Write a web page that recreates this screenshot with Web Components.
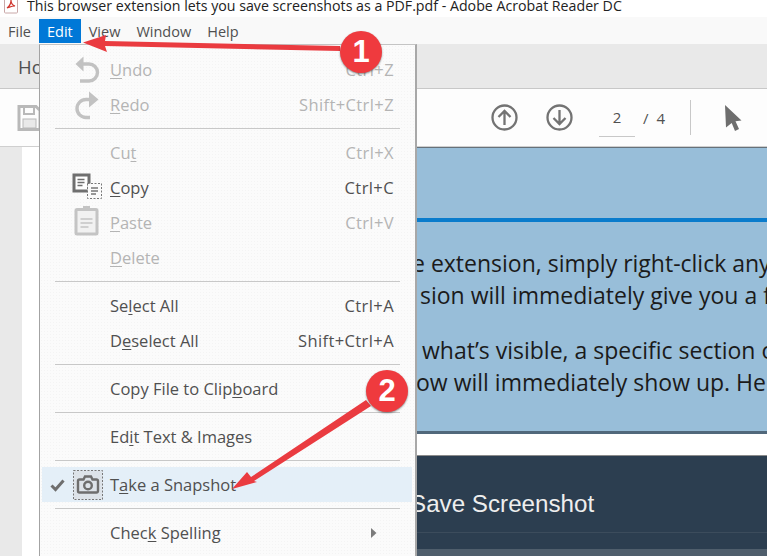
<!DOCTYPE html>
<html lang="en">
<head>
<meta charset="utf-8">
<title>Adobe Acrobat Reader DC</title>
<style>
  html, body { margin: 0; height: 100%; overflow: hidden; background: #fff; }
  body { font-family: "Open Sans", "Liberation Sans", sans-serif; display: flex; flex-direction: column; position: relative; }
  u { text-underline-offset: 2px; text-decoration-thickness: 1px; }
  [slot="keys"] { letter-spacing: .4px; }
</style>
</head>
<body>
<title-bar>This browser extension lets you save screenshots as a PDF.pdf - Adobe Acrobat Reader DC</title-bar>
<menu-bar></menu-bar>
<tab-bar>Home</tab-bar>
<tool-bar></tool-bar>
<doc-view></doc-view>

<edit-menu>
  <menu-row disabled>
    <svg slot="icon" width="30" height="30" viewBox="0 0 30 30"><path d="M9 9h7a8.500 8.500 0 0 1 0 17H7" fill="none" stroke="#c2c2c2" stroke-width="3.400"/><path d="M10.500 1.500v15L2.500 9z" fill="#c2c2c2"/></svg>
    <u>U</u>ndo<span slot="keys">Ctrl+Z</span>
  </menu-row>
  <menu-row disabled>
    <svg slot="icon" width="30" height="30" viewBox="0 0 30 30"><path d="M17 9.500h-4a9 9 0 0 0 0 18h4" fill="none" stroke="#c2c2c2" stroke-width="3.400"/><path d="M16 1.500v16l9.500-8z" fill="#c2c2c2"/></svg>
    <u>R</u>edo<span slot="keys">Shift+Ctrl+Z</span>
  </menu-row>
  <menu-sep></menu-sep>
  <menu-row disabled>Cu<u>t</u><span slot="keys">Ctrl+X</span></menu-row>
  <menu-row>
    <svg slot="icon" width="32" height="30" viewBox="0 0 32 30"><rect x="2" y="2" width="15" height="16" fill="#fff" stroke="#6f6f6f" stroke-width="3"/><path d="M5.500 6.500h7M5.500 9.500h7M5.500 12.500h5" stroke="#6f6f6f" stroke-width="1.300"/><rect x="15.500" y="10.500" width="14" height="15" fill="#fbfbfb" stroke="#777" stroke-dasharray="2 1.500"/><path d="M19 15h7M19 18h7M19 21h5" stroke="#777" stroke-width="1.300"/></svg>
    <u>C</u>opy<span slot="keys">Ctrl+C</span>
  </menu-row>
  <menu-row disabled>
    <svg slot="icon" width="32" height="34" viewBox="0 0 32 34"><rect x="4" y="3.500" width="21" height="24.500" rx="1" fill="#f1f1f1" stroke="#c4c4c4" stroke-width="3"/><rect x="11" y="0" width="7" height="5" fill="#c4c4c4"/><path d="M8.500 13h12M8.500 17h12M8.500 21h8" stroke="#c4c4c4" stroke-width="1.500"/></svg>
    <u>P</u>aste<span slot="keys">Ctrl+V</span>
  </menu-row>
  <menu-row disabled><u>D</u>elete</menu-row>
  <menu-sep></menu-sep>
  <menu-row>Se<u>l</u>ect All<span slot="keys">Ctrl+A</span></menu-row>
  <menu-row>D<u>e</u>select All<span slot="keys">Shift+Ctrl+A</span></menu-row>
  <menu-sep></menu-sep>
  <menu-row>Copy File to Clip<u>b</u>oard</menu-row>
  <menu-sep></menu-sep>
  <menu-row>Ed<u>i</u>t Text &amp; Images</menu-row>
  <menu-sep></menu-sep>
  <menu-row active checked>
    <svg slot="icon" width="30" height="30" viewBox="0 0 30 30"><rect x=".5" y=".5" width="29" height="29" fill="#dde3e9" stroke="#777" stroke-dasharray="2 1.500"/><path d="M6.500 9.500h4l1.500-3h6l1.500 3h4a1.500 1.500 0 0 1 1.500 1.500v10a1.500 1.500 0 0 1-1.500 1.500h-17A1.500 1.500 0 0 1 5 21V11a1.500 1.500 0 0 1 1.500-1.500z" fill="none" stroke="#6e6e6e" stroke-width="2.400"/><circle cx="15" cy="15.500" r="3.800" fill="none" stroke="#6e6e6e" stroke-width="2.400"/></svg>
    T<u>a</u>ke a Snapshot
  </menu-row>
  <menu-sep></menu-sep>
  <menu-row submenu>Chec<u>k</u> Spelling</menu-row>
</edit-menu>

<step-arrow style="left:0;top:0" points="83,42.500 106,35 105,41 340,46 340,51 105,46 107,52"></step-arrow>
<step-arrow style="left:0;top:0" points="232,489 247,472 251,477 366,400 371,406 254,481 257,482"></step-arrow>
<step-badge style="left:340px;top:31px">1</step-badge>
<step-badge style="left:366px;top:370px">2</step-badge>

<script>
'use strict';

// small helper so every element below is just a tag name and a template string
function define(name, html, setup) {
  customElements.define(name, class extends HTMLElement {
    constructor() {
      super();
      const shadow = this.attachShadow({ mode: 'open' });
      shadow.innerHTML = typeof html === 'function' ? html(this) : html;
      if (setup) setup(this, shadow);
    }
  });
}

define('title-bar', `
  <style>
    :host { display: flex; align-items: center; height: 17px; padding-left: 4px; gap: 9px; overflow: hidden;
      background: #fff; color: #222; font: 14.200px/17px "Open Sans", sans-serif; white-space: nowrap; flex: none; }
    svg { flex: none; margin-top: -7px; }
    span { margin-top: -7px; }
  </style>
  <svg width="14" height="17" viewBox="0 0 14 17"><path d="M.5 0v15a1 1 0 0 0 1 1h11a1 1 0 0 0 1-1V0" fill="#fff" stroke="#c9a8a8"/><path d="M3 11c3-2 4-5 4-8 0 3 1 5 4 6-3 0-5 1-8 2z" fill="none" stroke="#d0342c" stroke-width="1.200"/></svg>
  <span><slot></slot></span>
`);

define('menu-bar', `
  <style>
    :host { display: flex; height: 27px; padding: 2px 0 0 0; box-sizing: border-box; background: #f9f9f9; flex: none;
      font: 14.500px/25px "Open Sans", sans-serif; color: #505050; }
    span { padding: 0 8px; height: 24px; }
    .on { background: #0078d7; color: #fff; }
  </style>
  <span>File</span><span class="on">Edit</span><span>View</span><span>Window</span><span>Help</span>
`);

define('tab-bar', `
  <style>
    :host { display: flex; align-items: center; height: 45px; padding-left: 18px; box-sizing: border-box; flex: none;
      background: #e9e9e9; border-bottom: 1px solid #c8c8c8; color: #505050; font: 18.500px "Open Sans", sans-serif; }
  </style>
  <slot></slot>
`);

define('tool-bar', `
  <style>
    :host { display: flex; align-items: center; height: 58px; box-sizing: border-box; padding: 0 0 0 17px; flex: none;
      background: #fdfdfd; border-bottom: 1px solid #cfcfcf; color: #505050; font: 15px "Open Sans", sans-serif; }
    .save { margin-right: 450px; }
    .nav { margin-right: 28px; display: block; }
    .page { width: 36px; height: 36px; line-height: 32px; margin: 2px 0 0 26px; text-align: center; border-bottom: 1px solid #c8c8c8; box-sizing: border-box; }
    .of { margin-left: 8px; word-spacing: 4px; }
    .rule { width: 1px; height: 35px; background: #c8c8c8; margin-left: 25px; }
    .arrow { margin-left: 34px; }
  </style>
  <svg class="save" width="24" height="28" viewBox="0 0 24 28"><path d="M2 2.500h17l4 4V25.500H2z" fill="#fdfdfd" stroke="#b9b9b9" stroke-width="3"/><rect x="7" y="3" width="10" height="7" fill="#fdfdfd" stroke="#b9b9b9" stroke-width="2"/><rect x="6" y="15" width="13" height="9" fill="#e9e9e9" stroke="#b9b9b9" stroke-width="1"/></svg>
  <svg class="nav" width="27" height="27" viewBox="0 0 27 27"><circle cx="13.500" cy="13.500" r="12" fill="none" stroke="#737373" stroke-width="2.300"/><path d="M13.500 21V7M7.500 13l6-6 6 6" fill="none" stroke="#737373" stroke-width="2.300"/></svg>
  <svg class="nav" width="27" height="27" viewBox="0 0 27 27" style="margin-right:0"><circle cx="13.500" cy="13.500" r="12" fill="none" stroke="#737373" stroke-width="2.300"/><path d="M13.500 6v14M7.500 14l6 6 6-6" fill="none" stroke="#737373" stroke-width="2.300"/></svg>
  <span class="page">2</span>
  <span class="of">/ 4</span>
  <span class="rule"></span>
  <svg class="arrow" width="17" height="26" viewBox="0 0 17 26"><path d="M0 0l16.500 15.500-6 .8 3.500 7.700-4 2-3.300-8L1 22.500z" fill="#6e6e6e"/></svg>
`);

define('doc-view', `
  <style>
    :host { display: flex; flex: 1; min-height: 0; background: #fff; overflow: hidden; }
    .rail { width: 22px; background: #e9e9e9; flex: none; }
    .page { flex: 1; min-width: 0; margin-left: 18px; display: flex; flex-direction: column; overflow: hidden; }
    .blue { height: 287px; flex: none; box-sizing: border-box; background: #98bed9; border-top: 1px solid #66717a; border-bottom: 3px solid #51687b; color: #1b1b1b;
      font: 23px/32px "Open Sans", sans-serif; white-space: nowrap; padding-top: 70px; display: flex; flex-direction: column; }
    .band { height: 4px; background: #0a7ccc; flex: none; margin-bottom: 25px; }
    .line { margin-left: var(--x); height: 32px; flex: none; }
    .gap { height: 21px; flex: none; }
    .gap-p { height: 23px; flex: none; }
    .dark { flex: 1; background: #2c3e50; border-top: 1px solid #8b8b8b; display: flex; flex-direction: column; color: #eee; }
    .head { font: 24.200px "Liberation Sans", sans-serif; height: 77px; box-sizing: border-box; padding: 34px 0 0 370px; white-space: nowrap; border-bottom: 1px solid #3c4c5c; flex: none; }
    .foot { margin-top: 16px; flex: 1; background: #4f5e6c; }
  </style>
  <div class="rail"></div>
  <div class="page">
    <div class="blue">
      <div class="band"></div>
      <div class="line" style="--x:372px">e extension, simply right-click any</div>
      <div class="line" style="--x:380px">sion will immediately give you a f</div>
      <div class="gap-p"></div>
      <div class="line" style="--x:382px">what’s visible, a specific section o</div>
      <div class="line" style="--x:376px">ow will immediately show up. He</div>
    </div>
    <div class="gap"></div>
    <div class="dark">
      <div class="head">Save Screenshot</div>
      <div class="foot"></div>
    </div>
  </div>
`);

define('edit-menu', `
  <style>
    :host { display: block; position: absolute; left: 39px; top: 44px; width: 378px; height: 512px; box-sizing: border-box; overflow: hidden;
      padding: 7px 3px 0 2px; border-left: 1.500px solid #a3a3a3; border-top: 1px solid #c4c4c4; border-right: 2px solid #a8a8a8;
      background-color: #fbfbfb; background-image: radial-gradient(#f4f4f4 .6px, transparent .7px); background-size: 3px 3px;
      font: 16.500px "Open Sans", sans-serif; color: #505050; }
  </style>
  <slot></slot>
`);

define('menu-row', `
  <style>
    :host { display: flex; align-items: center; height: 35px; position: relative; padding: 0 18px 0 68px; white-space: nowrap; }
    :host([disabled]) { color: #b4b4b4; }
    :host([active]) { background: #e4eff8; }
    .icon { position: absolute; left: 30px; top: 0; bottom: 0; width: 32px; display: flex; align-items: center; justify-content: center; }
    .check { display: none; position: absolute; left: 8px; top: 11px; }
    :host([checked]) .check { display: block; }
    .text { flex: 1; }
    .more { display: none; position: absolute; right: 35px; top: 13px; }
    :host([submenu]) .more { display: block; }
  </style>
  <svg class="check" width="15" height="14" viewBox="0 0 15 14"><path d="M1.500 7.500l4 4 8-9" fill="none" stroke="#6e6e6e" stroke-width="3"/></svg>
  <span class="icon"><slot name="icon"></slot></span>
  <span class="text"><slot></slot></span>
  <slot name="keys"></slot>
  <svg class="more" width="6" height="10" viewBox="0 0 6 10"><path d="M0 0l5.500 5L0 10z" fill="#7c7c7c"/></svg>
`);

define('menu-sep', `
  <style>
    :host { display: block; height: 1px; background: #c8c8c8; margin: 6px 12px 6px 13px; }
  </style>
`);

define('step-arrow', host => `
  <style>
    :host { display: block; position: absolute; width: 767px; height: 556px; pointer-events: none; }
    svg { display: block; }
  </style>
  <svg width="767" height="556" viewBox="0 0 767 556"><polygon points="${host.getAttribute('points')}" fill="#ea3b40"/></svg>
`);

define('step-badge', `
  <style>
    :host { display: flex; align-items: center; justify-content: center; position: absolute; width: 42px; height: 42px; border-radius: 50%;
      background: #ef3a3e; box-shadow: 0 1px 2px rgba(0,0,0,.45); color: #fff; font: bold 31px "Liberation Sans", sans-serif; }
  </style>
  <slot></slot>
`);
</script>
</body>
</html>
